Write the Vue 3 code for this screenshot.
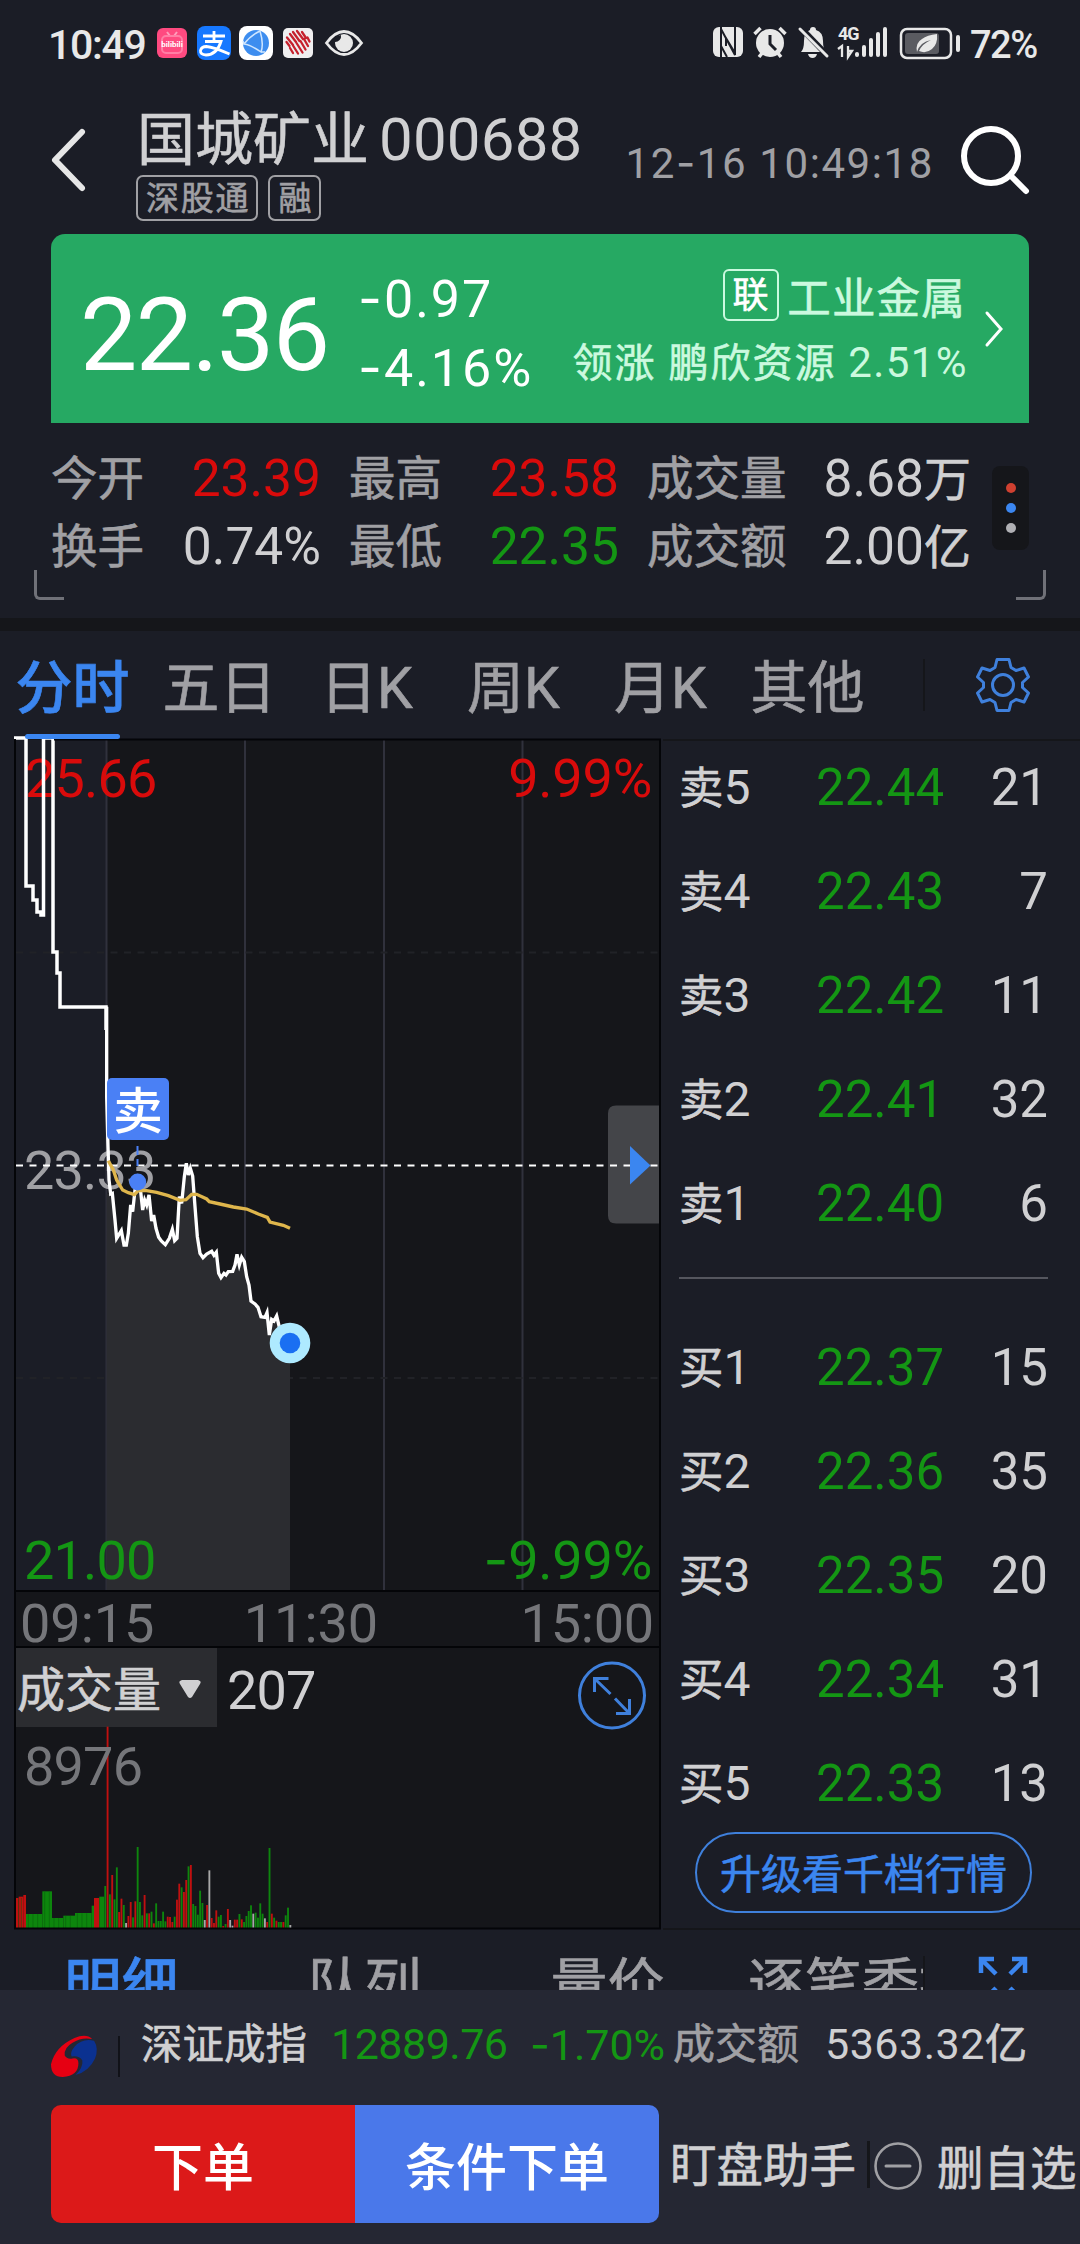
<script setup>
import { ref } from "vue";

const stats = [
  { label: "今开", value: "23.39", tone: "up" },
  { label: "最高", value: "23.58", tone: "up" },
  { label: "成交量", value: "8.68", unit: "万" },
  { label: "换手", value: "0.74%" },
  { label: "最低", value: "22.35", tone: "down" },
  { label: "成交额", value: "2.00", unit: "亿" },
];

const tabs = ["分时", "五日", "日K", "周K", "月K", "其他"];
const activeTab = ref("分时");

const detailTabs = ["明细", "队列", "量价", "逐笔委托"];
const activeDetail = ref("明细");

const sells = [
  ["5", "22.44", 21],
  ["4", "22.43", 7],
  ["3", "22.42", 11],
  ["2", "22.41", 32],
  ["1", "22.40", 6],
];
const buys = [
  ["1", "22.37", 15],
  ["2", "22.36", 35],
  ["3", "22.35", 20],
  ["4", "22.34", 31],
  ["5", "22.33", 13],
];

// intraday price, in thirds of a pixel below y = 1020
const price =
  "320,-40 320,230 324,380 327,480 332,522 337,520 345,600 350,655 364,632 372,675 379,675 385,640 392,555 398,575 405,510 413,480 422,515 428,570 434,540 440,555 447,525 455,603 461,585 468,625 476,652 484,663 496,674 508,655 517,628 524,662 531,655 538,530 545,550 553,470 559,430 565,465 571,445 578,468 585,560 592,650 600,700 609,713 620,702 635,694 642,706 649,697 656,760 663,773 672,760 678,765 685,755 698,754 705,735 711,703 718,735 725,712 733,725 740,770 747,795 753,843 765,852 774,862 783,890 795,892 801,878 808,945 815,898 822,903 830,888 840,930 870,968";
const average =
  "325,422 340,450 350,480 368,510 385,518 403,524 415,512 440,512 470,517 505,527 540,541 558,539 575,523 590,523 620,537 628,545 660,552 700,561 740,567 775,582 802,592 810,606 850,616 870,625";

// pre-market volume: x, width, height, colour
const auction = [
  [48, 8, 90, "r"],
  [56, 14, 94, "r"],
  [70, 8, 99, "r"],
  [78, 49, 42, "g"],
  [127, 29, 110, "g"],
  [156, 34, 30, "g"],
  [190, 35, 37, "g"],
  [225, 50, 45, "g"],
  [275, 7, 67, "g"],
  [282, 16, 90, "r"],
  [298, 14, 94, "g"],
];

// one bar per minute
const volume =
  "g126 r604 g101 r159 g86 g182 r48 r88 g69 w15 r36 r78 g32 r80 g243 g78 g38 r99 g44 r44 g49 r14 g74 g21 g21 g49 g20 r34 r33 r18 g34 r85 r133 g122 r108 r144 g185 r189 g72 g66 g40 g112 g75 w24 r69 w173 r30 r15 r53 g34 g39 r6 g12 r57 w24 w7 r25 r25 g42 r26 g18 g36 g51 g68 w43 g46 g31 g74 g43 w29 r18 g240 r43 g31 r22 g18 g18 r18 g38 g61 w9"
    .split(" ")
    .map((v, i) => ({ tone: v[0], h: Number(v.slice(1)), x: 313 + i * 6.94 }));
</script>

<template>
  <div class="page">
    <div class="status">
      <span class="clock">10:49</span>
      <svg class="app-pink" viewBox="0 0 30 30">
        <rect width="30" height="30" rx="6" fill="#ff4a80" />
        <path d="M10 4l3 4M20 4l-3 4" stroke="#ff9dbb" stroke-width="2" />
        <rect x="5" y="8" width="20" height="17" rx="4" fill="none" stroke="#ff7ea5" stroke-width="2" />
        <text x="15" y="19" text-anchor="middle" class="bili">bilibili</text>
      </svg>
      <svg class="app-pay" viewBox="0 0 34 34">
        <rect width="34" height="34" rx="8" fill="#1678ff" />
        <path d="M6 10h22M17 5v11M8 15.500h16q-4 13-15 13.500-6-.5-5.500-4.500 1-4 6-4 7 .5 23 7.500" fill="none" stroke="#fff" stroke-width="2.800" />
      </svg>
      <svg class="app-globe" viewBox="0 0 34 34">
        <rect width="34" height="34" rx="8" fill="#fff" />
        <circle cx="17" cy="17" r="13" fill="#3d8def" />
        <path d="M21 5Q12 9 5 18q7 1 17 8 3-8-1-21M22 26l4 0M5 18l-1-3" fill="none" stroke="#cfe6ff" stroke-width="1.500" />
      </svg>
      <svg class="app-bank" viewBox="0 0 30 30">
        <rect width="30" height="30" rx="5" fill="#efeff0" />
        <path
          d="M3.500 14l3 4M4 9.500l6 7.500M7 6l6 8M10 4l6.500 9M14 3l6 8M19 4l4 6M7 20l3 5M10 17.500l5 8M13.500 15l6 9.500M17.500 13l5 8.500M21 11l4 7M24.500 9.500l2 4"
          stroke="#c5202c"
          stroke-width="2.300"
          stroke-linecap="round"
        />
      </svg>
      <svg class="eye" viewBox="0 0 38 26">
        <path d="M1.500 13Q10 1.500 19 1.500T36.500 13Q28 24.500 19 24.500T1.500 13z" fill="none" stroke="#e8e8e8" stroke-width="2.800" />
        <circle cx="19" cy="13" r="9" fill="#e8e8e8" />
        <path d="M10 12a6 6 0 0 0 6-7l-6 2z" fill="#1b1d26" />
      </svg>

      <svg class="sys" viewBox="0 0 247 34">
        <g fill="#e8e8e8">
          <rect x="0" y="1" width="30" height="30" rx="6" />
          <path d="M8 1v30M8 3l14 26V1M13 20v-8l9 15M14 31l-6-11M22 1v28" fill="none" stroke="#1b1d26" stroke-width="2" />
          <circle cx="57" cy="17" r="14" />
          <path d="M41.500 8l6-6M72.500 8l-6-6M46 31l4-5M68 31l-4-5" stroke="#e8e8e8" stroke-width="3.500" />
          <path d="M57 9v9l6 6" fill="none" stroke="#1b1d26" stroke-width="3" />
          <path d="M88 26q3-3 3-11 0-9 6-11 0-3 3-3t3 3q7 2 7 11 0 8 3 11zM95 28h9q-1 4-4.500 4T95 28z" />
          <path d="M87 1l28 29" stroke="#1b1d26" stroke-width="6" />
          <path d="M87 3l27 27" stroke="#e8e8e8" stroke-width="3" stroke-linecap="round" />
          <text x="125" y="14" class="net">4G</text>
          <path d="M125 23l4-3v11M135 20v11l4-6h-4" fill="none" stroke="#e8e8e8" stroke-width="2.300" />
          <rect x="142" y="26" width="4" height="5" rx="2" />
          <rect x="149" y="19" width="4" height="12" rx="2" />
          <rect x="156" y="12" width="4" height="19" rx="2" />
          <rect x="163" y="6" width="4" height="25" rx="2" />
          <rect x="170" y="1" width="4" height="30" rx="2" />
        </g>
        <rect x="188" y="3" width="50" height="29" rx="6" fill="none" stroke="#e8e8e8" stroke-width="2.500" />
        <rect x="192" y="7" width="34" height="21" rx="3" fill="#5a5b61" />
        <rect x="243" y="9" width="4" height="17" rx="2" fill="#e8e8e8" />
        <path d="M204 26q-2-9 5-13 5-4 15-5 1 10-5 15-6 5-13 2 3-7 12-11-11 2-14 12z" fill="#e8e8e8" />
      </svg>
      <span class="percent">72%</span>
    </div>

    <header class="header">
      <svg class="back" viewBox="0 0 34 62">
        <path d="M31 3L4 31l27 28" fill="none" stroke="#e6e6e6" stroke-width="6" stroke-linecap="round" stroke-linejoin="round" />
      </svg>
      <div class="title">
        <h1>国城矿业<span>000688</span></h1>
        <div class="tags">
          <span class="tag">深股通</span>
          <span class="tag">融</span>
        </div>
      </div>
      <time>12<b class="dash">-</b>16 10:49:18</time>
      <svg class="search" viewBox="0 0 68 68">
        <circle cx="30" cy="30" r="27" fill="none" stroke="#fff" stroke-width="6" />
        <path d="M50 50l15 15" stroke="#fff" stroke-width="6" stroke-linecap="round" />
      </svg>
    </header>

    <section class="quote">
      <div class="last">22.36</div>
      <div class="change">
        <span><b class="dash">-</b>0.97</span>
        <span><b class="dash">-</b>4.16%</span>
      </div>
      <div class="sector">
        <div class="sector-name"><i>联</i>工业金属</div>
        <div class="sector-lead">领涨 鹏欣资源 <b>2.51%</b></div>
      </div>
      <svg class="more" viewBox="0 0 18 36">
        <path d="M2 2l14 16L2 34" fill="none" stroke="#fff" stroke-width="3" stroke-linecap="round" />
      </svg>
    </section>

    <section class="stats">
      <div class="stat-grid">
        <div v-for="s in stats" :key="s.label" class="stat">
          <span class="label">{{ s.label }}</span>
          <span class="value" :class="s.tone">{{ s.value }}<em v-if="s.unit">{{ s.unit }}</em></span>
        </div>
      </div>
      <div class="menu"><i></i><i></i><i></i></div>
      <span class="corner left"></span>
      <span class="corner right"></span>
    </section>

    <div class="band"></div>

    <nav class="tabs">
      <span v-for="t in tabs" :key="t" class="tab" :class="{ active: t === activeTab }" @click="activeTab = t">{{ t }}</span>
      <span class="tab-divider"></span>
      <svg class="gear" viewBox="0 0 54 54">
        <g fill="none" stroke="#3f80dc" stroke-width="3" stroke-linejoin="round">
          <path
            d="M21 1.500h12l2 8 5 3 8-2.500 4.500 9-6 5.500v5l6 5.500-4.500 9-8-2.500-5 3-2 8H21l-2-8-5-3-8 2.500-4.500-9 6-5.500v-5l-6-5.500 4.500-9 8 2.500 5-3z"
          />
          <circle cx="27" cy="27" r="10.500" />
        </g>
      </svg>
    </nav>

    <main class="main">
      <svg class="chart" viewBox="0 739 662 1191">
        <!-- price panel -->
        <rect x="14" y="739" width="647" height="1190" fill="#15161a" />
        <rect x="16" y="740" width="90" height="850" fill="#1b1d26" />
        <g stroke="#30313c" stroke-width="2">
          <path d="M106.500 740V1590M245 740V1590M384 740V1590M522.500 740V1590" />
        </g>
        <path d="M16 952.500H660M16 1378H660" stroke="#212227" stroke-width="2" stroke-dasharray="7 6.500" />
        <g transform="translate(0 1020) scale(.33333)">
          <polygon :points="'320,522 ' + price.slice(price.indexOf('332')) + ' 870,1710 320,1710'" fill="#2b2c30" />
        </g>
        <g class="axis">
          <text x="25" y="797" class="up">25.66</text>
          <text x="652" y="797" class="up end">9.99%</text>
          <text x="24" y="1189" class="mid">23.33</text>
          <text x="24" y="1579" class="down">21.00</text>
          <text x="652" y="1579" class="down end"><tspan class="dash">-</tspan>9.99%</text>
        </g>
        <path
          d="M14 738H26V886H33V900H37V912H41V915H43.500V738H53V952H57V973H60V1007H106V1030"
          fill="none"
          stroke="#fff"
          stroke-width="3.500"
        />
        <path d="M660 1105.500H616q-8 0-8 8v102q0 8 8 8h44z" fill="#444549" />
        <path d="M16 1165.500H660" stroke="#fff" stroke-width="2" stroke-dasharray="7 6.500" />
        <path d="M630 1146l20.500 19.500-20.500 19z" fill="#3b86f0" />
        <g transform="translate(0 1020) scale(.33333)" fill="none">
          <polyline :points="price" stroke="#fff" stroke-width="10" />
          <polyline :points="average" stroke="#dfb64c" stroke-width="10" />
        </g>

        <rect x="107" y="1078" width="62" height="62" rx="5" fill="#4a80f5" />
        <text x="138" y="1129" class="mark">卖</text>
        <path d="M137.500 1146V1166" stroke="#4a80f5" stroke-width="2" stroke-dasharray="9 4" />
        <circle cx="137.700" cy="1182" r="8.500" fill="#4a80f5" />
        <circle cx="290" cy="1343" r="20.300" fill="#aeeaff" />
        <circle cx="290" cy="1343" r="10.300" fill="#1a6ff2" />

        <!-- time axis -->
        <rect x="16" y="1592" width="644" height="54" fill="#15161a" />
        <g class="axis time dim">
          <text x="20" y="1641.500">09:15</text>
          <text x="311" y="1641.500" text-anchor="middle">11:30</text>
          <text x="654" y="1641.500" class="end">15:00</text>
        </g>

        <!-- volume panel -->
        <rect x="16" y="1648" width="201" height="79" fill="#2b2c30" />
        <text x="17" y="1707" class="pick">成交量</text>
        <path d="M182 1680h16q4 1 2 4l-8 13q-2 2-4 0l-8-13q-2-3 2-4z" fill="#d0d0d2" />
        <text x="227" y="1709" class="axis light">207</text>
        <g transform="translate(0 1928) scale(.33333)">
          <rect v-for="a in auction" :key="a[0]" :x="a[0]" :y="-a[2]" :width="a[1]" :height="a[2]" :class="'bar-' + a[3]" />
          <path d="M56 0V-90M64 0V-90M85 0V-42M99 0V-42M113 0V-42M134 0V-108M148 0V-108M162 0V-30M176 0V-30M197 0V-37M211 0V-37M232 0V-44M246 0V-44M260 0V-44" stroke="#0b5a0e" stroke-width="1.500" />
          <rect v-for="b in volume" :key="b.x" :x="b.x" :y="-b.h" width="5.600" :height="b.h" :class="'bar-' + b.tone" />
        </g>
        <text x="24" y="1784.500" class="axis dim">8976</text>
        <g fill="none" stroke="#3f80dc" stroke-width="3">
          <circle cx="612" cy="1695.500" r="32.500" />
          <path d="M594.500 1692v-13.500h14M595 1679l15.500 15M615 1698.500l14.500 15M616 1713.500h13.500V1699" />
        </g>

        <!-- frames -->
        <g fill="none" stroke="#040508" stroke-width="2">
          <path d="M54 739.500H661M15 739V1929M660 739V1929M15 1591H660M15 1647H660M14 1928.500H661" />
        </g>
      </svg>

      <aside class="book">
        <div class="orders">
          <div v-for="o in sells" :key="o[0]" class="order">
            <span class="side">卖<b>{{ o[0] }}</b></span>
            <span class="price">{{ o[1] }}</span>
            <span class="qty">{{ o[2] }}</span>
          </div>
        </div>
        <div class="rule"></div>
        <div class="orders">
          <div v-for="o in buys" :key="o[0]" class="order">
            <span class="side">买<b>{{ o[0] }}</b></span>
            <span class="price">{{ o[1] }}</span>
            <span class="qty">{{ o[2] }}</span>
          </div>
        </div>
        <button class="upgrade">升级看千档行情</button>
      </aside>
    </main>

    <div class="details">
      <span v-for="d in detailTabs" :key="d" class="detail" :class="{ active: d === activeDetail }" @click="activeDetail = d">{{ d }}</span>
      <span class="detail-divider"></span>
      <svg class="expand" viewBox="0 0 48 48">
        <path
          d="M2 16V2h13M2 2l15 15M33 2h13v14M46 2L31 17M2 33v13h13M2 46l15-15M33 46h13V33M46 46L31 31"
          fill="none"
          stroke="#3b86f0"
          stroke-width="4.500"
        />
      </svg>
    </div>

    <footer class="footer">
      <div class="index">
        <svg class="logo" viewBox="0 0 48 48">
          <path d="M42 6Q36 0 24 5 4 14 0 32q0 13 12 13 16-1 16-14 0-6-6-5-6 1-8-3-1-8 8-13 9-6 20-4z" fill="#e60012" />
          <path d="M44 8q-12-3-20 6-5 6-3 10 8-1 11 4 1 7-7 15 14-4 20-17 4-10-1-18z" fill="#0b3190" />
        </svg>
        <span class="index-divider"></span>
        <span class="index-name">深证成指</span>
        <span class="index-value">12889.76</span>
        <span class="index-pct"><b class="dash">-</b>1.70%</span>
        <span class="index-label">成交额</span>
        <span class="index-amount">5363.32<em>亿</em></span>
      </div>
      <div class="actions">
        <button class="order-btn">下单</button>
        <button class="cond-btn">条件下单</button>
        <span class="helper">盯盘助手</span>
        <span class="action-divider"></span>
        <svg class="minus" viewBox="0 0 48 48">
          <circle cx="24" cy="24" r="22.500" fill="none" stroke="#a0a0a4" stroke-width="2.600" />
          <path d="M12 24h24" stroke="#a0a0a4" stroke-width="3" stroke-linecap="round" />
        </svg>
        <span class="remove">删自选</span>
      </div>
    </footer>
  </div>
</template>

<style>
body {
  background: #1b1d26;
}
</style>

<style scoped>
.page {
  display: flex;
  flex-direction: column;
  width: 1080px;
  height: 2244px;
  overflow: hidden;
  background: #1b1d26;
  color: #d0d0d2;
  font-family: Roboto, "Noto Sans CJK SC", sans-serif;
  white-space: nowrap;
}

i,
em,
b {
  font-style: normal;
  font-weight: 400;
}

svg {
  display: block;
  flex: none;
  overflow: visible;
}

button {
  padding: 0;
  border: 0;
  font-family: inherit;
}

/* slightly heavier hanzi */
h1,
.tag,
.sector-name,
.sector-lead,
.label,
.stat em,
.tab,
.side,
.detail,
.upgrade,
.index-name,
.index-label,
.index-amount em,
.helper,
.remove {
  -webkit-text-stroke: 0.600px currentColor;
}

h1 span,
.side b,
.sector-lead b {
  -webkit-text-stroke: 0;
}

.dash {
  font-family: Inter, sans-serif;
}

.up {
  color: #d90b0b;
  fill: #d90b0b;
}

.down {
  color: #149614;
  fill: #149614;
}

/* status bar */
.status {
  display: flex;
  align-items: center;
  height: 86px;
  padding-left: 48px;
  color: #e8e8e8;
}

.clock {
  width: 109px;
  padding-top: 3px;
  font-size: 41px;
  font-weight: 500;
  letter-spacing: -1.300px;
  line-height: 86px;
}

.app-pink {
  width: 30px;
  height: 30px;
}

.bili {
  fill: #fff;
  font-size: 8px;
  font-weight: 700;
}

.app-pay {
  width: 34px;
  height: 34px;
  margin-left: 10px;
}

.app-globe {
  width: 34px;
  height: 34px;
  margin-left: 8px;
}

.app-bank {
  width: 30px;
  height: 30px;
  margin-left: 10px;
}

.eye {
  width: 38px;
  height: 26px;
  margin-left: 12px;
}

.sys {
  width: 247px;
  height: 34px;
  margin-left: 350px;
}

.net {
  font-size: 18px;
  font-weight: 700;
  letter-spacing: -1px;
}

.percent {
  margin-left: 10px;
  padding-top: 3px;
  font-size: 38px;
  font-weight: 500;
  letter-spacing: -1.500px;
}

/* header */
.header {
  display: flex;
  align-items: center;
  height: 148px;
  padding: 0 51px;
}

.back {
  width: 34px;
  height: 62px;
}

.title {
  margin: 6px 0 0 51px;
}

.title h1 {
  margin: 0 0 0 1px;
  font-size: 58px;
  font-weight: 400;
  line-height: 70px;
}

.title h1 span {
  margin-left: 10px;
  font-size: 60px;
  letter-spacing: 0.200px;
}

.tags {
  display: flex;
  gap: 10px;
}

.tag {
  height: 42px;
  padding: 0 6px 0 8px;
  border: 2px solid #a0a0a4;
  border-radius: 7px;
  color: #a0a0a4;
  font-size: 33px;
  letter-spacing: 1.800px;
  line-height: 44px;
}

.header time {
  margin: 5px 27px 0 auto;
  color: #a0a0a4;
  font-size: 42px;
  letter-spacing: 1.600px;
}

.search {
  width: 68px;
  height: 68px;
}

/* quote card */
.quote {
  display: flex;
  height: 189px;
  margin: 0 51px;
  border-radius: 14px 14px 0 0;
  background: #26a963;
  color: #fff;
}

.last {
  width: 307px;
  padding-left: 29px;
  box-sizing: border-box;
  font-size: 102px;
  letter-spacing: -1.500px;
  line-height: 203px;
}

.change {
  display: flex;
  flex-direction: column;
  padding-top: 31px;
  font-size: 52px;
  letter-spacing: 2px;
  line-height: 68px;
}

.sector {
  margin-left: auto;
  text-align: right;
  color: #cbf9df;
}

.sector-name {
  display: flex;
  align-items: center;
  justify-content: flex-end;
  height: 50px;
  margin: 36px 2px 0 0;
  font-size: 43.500px;
  letter-spacing: 1.200px;
}

.sector-name i {
  width: 52px;
  height: 48px;
  margin-right: 8px;
  border: 2px solid #cbf9df;
  border-radius: 6px;
  color: #fff;
  font-size: 36px;
  line-height: 50px;
  text-align: center;
}

.sector-lead {
  height: 80px;
  font-size: 40px;
  letter-spacing: 2px;
  line-height: 86px;
}

.sector-lead b {
  font-size: 42px;
  letter-spacing: 1.400px;
}

.more {
  width: 18px;
  height: 36px;
  margin: 77px 26px 0 17px;
}

/* stats */
.stats {
  position: relative;
  display: flex;
  height: 195px;
  padding: 0 51px;
}

.stat-grid {
  display: grid;
  grid-template-columns: 270px 270px 324px;
  grid-auto-rows: 68px;
  column-gap: 28px;
  padding-top: 22px;
}

.stat {
  display: flex;
  justify-content: space-between;
  line-height: 68px;
}

.stat .label {
  color: #a0a0a4;
  font-size: 46.500px;
}

.stat .value {
  font-size: 51.500px;
}

.stat em {
  font-size: 47px;
}

.menu {
  display: flex;
  flex-direction: column;
  align-items: center;
  justify-content: center;
  gap: 10px;
  width: 37px;
  height: 84px;
  margin: 43px 0 0 21px;
  border-radius: 8px;
  background: #15161a;
}

.menu i {
  width: 10px;
  height: 10px;
  border-radius: 50%;
  background: #cf4030;
}

.menu i:nth-child(2) {
  background: #3b86f0;
}

.menu i:nth-child(3) {
  background: #b0b0b4;
}

.corner {
  position: absolute;
  top: 147px;
  width: 27px;
  height: 27px;
  border-bottom: 3px solid #707178;
}

.corner.left {
  left: 34px;
  border-left: 3px solid #707178;
  border-bottom-left-radius: 6px;
}

.corner.right {
  right: 34px;
  border-right: 3px solid #707178;
  border-bottom-right-radius: 6px;
}

.band {
  height: 13px;
  background: #15161a;
}

/* period tabs */
.tabs {
  display: flex;
  height: 108px;
  margin-left: -1px;
}

.tab {
  position: relative;
  width: 147px;
  color: #a0a0a4;
  font-size: 57px;
  line-height: 116px;
  text-align: center;
}

.tab.active {
  color: #3b86f0;
  font-weight: 500;
}

.tab.active::after {
  content: "";
  position: absolute;
  bottom: 0;
  left: 26px;
  width: 95px;
  height: 5px;
  border-radius: 3px;
  background: #3b86f0;
}

.tab-divider {
  width: 2px;
  height: 52px;
  margin: 28px 0 0 42px;
  background: #15161a;
}

.gear {
  width: 54px;
  height: 54px;
  margin: 27px 0 0 51px;
}

/* chart and order book */
.main {
  display: flex;
  height: 1191px;
}

.chart {
  width: 662px;
  height: 1191px;
}

.axis {
  font-size: 54px;
  letter-spacing: -0.800px;
}

.axis.time {
  letter-spacing: 0;
}

.end {
  letter-spacing: -0.200px;
  text-anchor: end;
}

.mid {
  fill: #a0a0a4;
}

.dim {
  fill: #75767a;
}

.light {
  fill: #d0d0d2;
}

.mark {
  fill: #fff;
  font-size: 50px;
  font-weight: 500;
  text-anchor: middle;
}

.pick {
  fill: #d0d0d2;
  stroke: #d0d0d2;
  stroke-width: 0.600px;
  font-size: 48px;
}

.bar-r {
  fill: #c01010;
}

.bar-g {
  fill: #0d860d;
}

.bar-w {
  fill: #a8a8a8;
}

.book {
  width: 371px;
  margin-left: 1px;
  padding: 0 32px 0 16px;
  box-shadow: inset 0 2px #15161a, inset 0 -2px #15161a;
}

.orders {
  display: flex;
  flex-direction: column;
  gap: 10px;
}

.order {
  display: grid;
  grid-template-columns: 137px 140px 1fr;
  height: 94px;
  font-size: 51px;
  line-height: 97px;
}

.side {
  font-size: 44.500px;
}

.side b {
  font-size: 48px;
}

.price {
  color: #149614;
}

.qty {
  text-align: right;
}

.rule {
  height: 2px;
  margin: 28px 0 40px;
  background: #55565e;
}

.upgrade {
  width: 337px;
  height: 81px;
  margin: 3px 0 0 16px;
  padding-bottom: 4px;
  border: 2px solid #3f80dc;
  border-radius: 41px;
  background: none;
  color: #3b86f0;
  font-size: 41px;
}

/* detail tabs */
.details {
  display: flex;
  height: 60px;
  overflow: hidden;
}

.detail {
  width: 243px;
  color: #a0a0a4;
  font-size: 57px;
  line-height: 111px;
  text-align: center;
}

.detail:nth-child(4) {
  width: 175px;
  padding-left: 19px;
  overflow: hidden;
  text-align: left;
}

.detail.active {
  color: #3b86f0;
  font-weight: 500;
}

.detail-divider {
  width: 2px;
  margin-top: 26px;
  background: #15161a;
}

.expand {
  width: 48px;
  height: 48px;
  margin: 27px 0 0 54px;
}

/* bottom bar */
.footer {
  height: 254px;
  background: #252733;
}

.index {
  display: flex;
  align-items: center;
  height: 115px;
  padding-left: 51px;
  font-size: 43px;
  line-height: 109px;
}

.index > span {
  padding-bottom: 6px;
}

.logo {
  width: 47px;
  height: 47px;
  margin-top: 18px;
}

.index > .index-divider {
  width: 2px;
  height: 41px;
  margin: 18px 21px 0 20px;
  padding: 0;
  background: #111218;
}

.index-name {
  width: 190px;
  font-size: 41.500px;
}

.index-value {
  width: 199px;
  color: #149614;
  letter-spacing: -0.500px;
}

.index-pct {
  width: 143px;
  color: #149614;
}

.index-label {
  width: 152px;
  color: #a0a0a4;
  font-size: 42px;
}

.index-amount {
  letter-spacing: 0.500px;
}

.index-amount em {
  font-size: 42.500px;
}

.actions {
  display: flex;
  align-items: center;
  height: 118px;
  padding-left: 51px;
}

.order-btn,
.cond-btn {
  flex: none;
  width: 304px;
  height: 118px;
  border-radius: 10px 0 0 10px;
  background: #dc1919;
  color: #fff;
  font-size: 51px;
  font-weight: 500;
}

.cond-btn {
  border-radius: 0 10px 10px 0;
  background: #4a78ea;
}

.helper {
  margin: 3px 0 0 11px;
  font-size: 46.500px;
  line-height: 118px;
}

.action-divider {
  flex: none;
  width: 3px;
  height: 47px;
  margin: 0 4px 0 11px;
  background: #15161a;
}

.minus {
  width: 48px;
  height: 48px;
  margin-top: 3px;
}

.remove {
  margin: 1px 0 0 15px;
  font-size: 46.500px;
}
</style>
